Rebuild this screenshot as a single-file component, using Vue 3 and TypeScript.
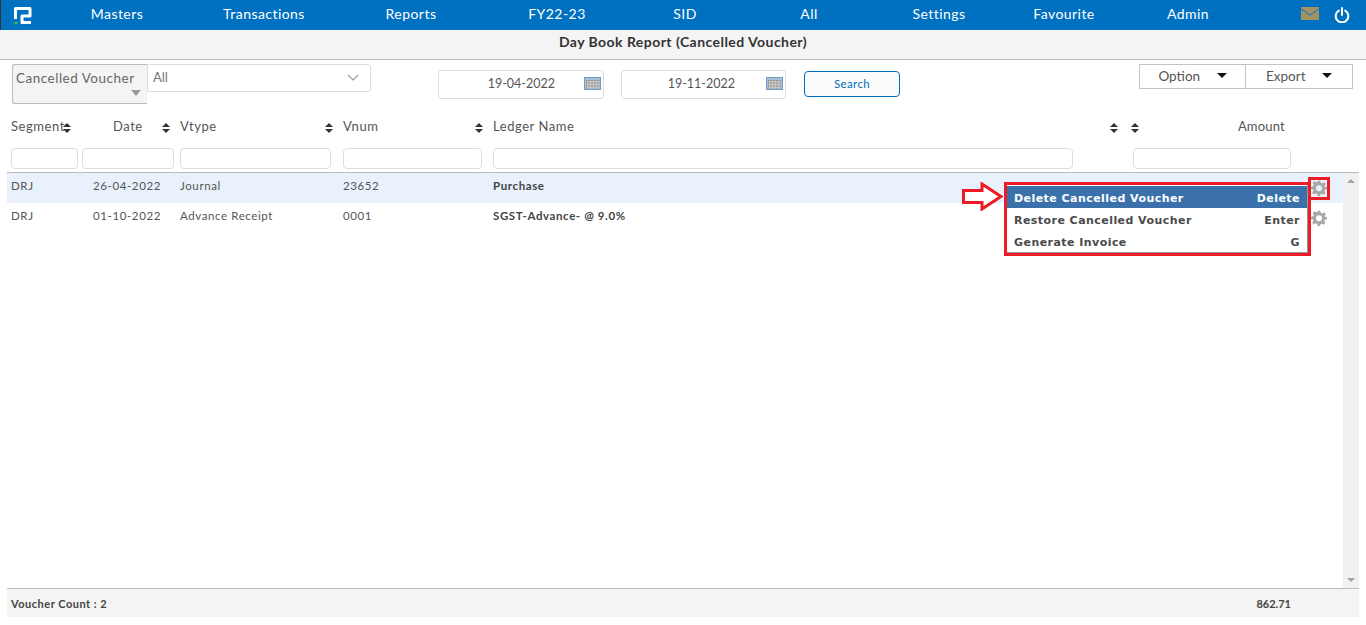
<template>
  <div class="page">
    <!-- Barra superior -->
    <header class="topbar">
      <svg class="logo" viewBox="0 0 18 18" fill="none">
        <path d="M1.500 12 V1.500 H16 V9 H8 V15.500 H17" stroke="#fff" stroke-width="3" stroke-linejoin="round" />
        <circle cx="2" cy="16" r="1.600" fill="#35c14a" />
      </svg>
      <nav class="menu">
        <a v-for="item in navItems" :key="item" class="menu-item">{{ item }}</a>
      </nav>
      <div class="top-icons">
        <svg class="mail" viewBox="0 0 18 13">
          <rect width="18" height="13" fill="#a3935f" />
          <path d="M0 2 L9 8 L18 2" fill="none" stroke="#2a7cc0" stroke-width="1.2" />
        </svg>
        <svg class="power" viewBox="0 0 16 16" fill="none" stroke="#fff" stroke-width="2" stroke-linecap="round">
          <path d="M4.800 3.600 A6.300 6.300 0 1 0 11.200 3.600" />
          <path d="M8 1 V8" />
        </svg>
      </div>
    </header>

    <div class="title-bar">Day Book Report (Cancelled Voucher)</div>

    <!-- Filtros -->
    <section class="filters">
      <div class="type-select">
        <span>Cancelled Voucher</span>
        <i class="type-caret"></i>
      </div>
      <div class="all-select">
        <span>All</span>
        <svg class="chevron" viewBox="0 0 12 7" fill="none" stroke="#999" stroke-width="1.1">
          <path d="M1 1 L6 6 L11 1" />
        </svg>
      </div>
      <div v-for="d in dates" :key="d" class="date-box">
        <span>{{ d }}</span>
        <svg class="calendar" viewBox="0 0 17 13">
          <rect x="0.5" y="0.5" width="16" height="12" fill="#a9bfd8" stroke="#6f9bc8" />
          <rect x="2" y="3" width="13" height="8.5" fill="#777" />
          <path d="M2 4.500 H15 M2 6 H15 M2 7.500 H15 M2 9 H15 M2 10.500 H15 M3.500 3 V12 M5 3 V12 M6.500 3 V12 M8 3 V12 M9.500 3 V12 M11 3 V12 M12.500 3 V12 M14 3 V12" stroke="#ddd" stroke-width="0.6" />
        </svg>
      </div>
      <button class="search-btn">Search</button>
      <div class="actions">
        <button class="action-btn">Option <i class="caret"></i></button>
        <button class="action-btn">Export <i class="caret"></i></button>
      </div>
    </section>

    <!-- Tabla -->
    <section class="grid-head">
      <div v-for="col in columns" :key="col.label + col.cls" class="head-cell" :class="col.cls">
        <span>{{ col.label }}</span>
        <svg v-if="col.sort" class="sort" viewBox="0 0 8 10">
          <path d="M4 0 L8 4 H0 Z M4 10 L0 6 H8 Z" fill="#2e3338" />
        </svg>
      </div>
    </section>
    <section class="grid-filter">
      <input v-for="col in inputCols" :key="col" class="col-input" :class="col" type="text" />
    </section>

    <div class="grid-body">
      <div class="rows">
        <div v-for="(row, i) in rows" :key="row.vnum" class="row" :class="{ selected: i === 0 }">
          <span class="c-seg">{{ row.segment }}</span>
          <span class="c-date">{{ row.date }}</span>
          <span class="c-type">{{ row.vtype }}</span>
          <span class="c-num">{{ row.vnum }}</span>
          <span class="c-ledger">{{ row.ledger }}</span>
          <svg class="gear" viewBox="0 0 24 24">
            <path fill="#a8a8a8" fill-rule="evenodd" d="M10 1h4l.6 3.200 2.200.9 2.700-1.800 2.800 2.800-1.800 2.700.9 2.200L24 10v4l-3.200.6-.9 2.200 1.800 2.700-2.800 2.800-2.700-1.800-2.200.9L14 24h-4l-.6-3.200-2.200-.9-2.700 1.800-2.800-2.800 1.800-2.700-.9-2.200L0 14v-4l3.200-.6.9-2.200-1.800-2.700 2.800-2.800 2.700 1.800 2.200-.9zM12 8a4.500 4.500 0 1 0 0 9 4.500 4.500 0 0 0 0-9z" />
          </svg>
        </div>
      </div>
      <div class="scrollbar">
        <i class="arrow-up"></i>
        <i class="arrow-down"></i>
      </div>

      <!-- Menú contextual -->
      <div class="context-menu">
        <div v-for="(m, i) in menuItems" :key="m.label" class="context-item" :class="{ active: i === 0 }">
          <span>{{ m.label }}</span>
          <span>{{ m.key }}</span>
        </div>
      </div>
      <div class="gear-mark"></div>
      <svg class="red-arrow" viewBox="0 0 41 29">
        <path d="M1.500 8.500 H20 V2 L39 14.500 L20 27 V20.500 H1.500 Z" fill="#fff" stroke="#ed1c24" stroke-width="3" />
      </svg>
    </div>

    <footer class="footer">
      <span class="count">Voucher Count : 2</span>
      <span class="total">862.71</span>
    </footer>
  </div>
</template>

<script setup lang="ts">
const navItems = ['Masters', 'Transactions', 'Reports', 'FY22-23', 'SID', 'All', 'Settings', 'Favourite', 'Admin']
const dates = ['19-04-2022', '19-11-2022']

const columns = [
  { label: 'Segment', cls: 'h-seg', sort: true },
  { label: 'Date', cls: 'h-date', sort: true },
  { label: 'Vtype', cls: 'h-type', sort: true },
  { label: 'Vnum', cls: 'h-num', sort: true },
  { label: 'Ledger Name', cls: 'h-ledger', sort: true },
  { label: '', cls: 'h-blank', sort: true },
  { label: 'Amount', cls: 'h-amount', sort: false },
]

const inputCols = ['i-seg', 'i-date', 'i-type', 'i-num', 'i-ledger', 'i-amount']

const rows = [
  { segment: 'DRJ', date: '26-04-2022', vtype: 'Journal', vnum: '23652', ledger: 'Purchase' },
  { segment: 'DRJ', date: '01-10-2022', vtype: 'Advance Receipt', vnum: '0001', ledger: 'SGST-Advance- @ 9.0%' },
]

const menuItems = [
  { label: 'Delete Cancelled Voucher', key: 'Delete' },
  { label: 'Restore Cancelled Voucher', key: 'Enter' },
  { label: 'Generate Invoice', key: 'G' },
]
</script>

<style>
html, body {
  margin: 0;
  background: #fff;
}
</style>

<style scoped>
.page {
  height: 625px;
  display: flex;
  flex-direction: column;
  overflow: hidden;
  font-family: Lato, "Open Sans", sans-serif;
  color: #555;
  background: #fff;
}

/* Barra superior */
.topbar {
  height: 30px;
  flex: none;
  display: flex;
  align-items: center;
  background: #0070c0;
  border-left: 1px solid #333;
  box-sizing: border-box;
}

.logo {
  width: 18px;
  height: 18px;
  margin: 1px 12px 0 13px;
  flex: none;
}

.menu {
  display: grid;
  grid-template-columns: 146px 148px 146px 146px 110px 138px 122px 128px 120px;
  width: 1204px;
  margin-top: -4px;
}

.menu-item {
  text-align: center;
  color: #fff;
  font-size: 14px;
  letter-spacing: 0.45px;
}

.top-icons {
  display: flex;
  align-items: center;
  gap: 15px;
  margin-left: 53px;
}

.mail {
  width: 18px;
  height: 13px;
  margin-top: -4px;
}

.power {
  width: 16px;
  height: 16px;
}

.title-bar {
  height: 29px;
  flex: none;
  background: #f4f4f4;
  border-bottom: 1px solid #bbb;
  text-align: center;
  font-size: 14px;
  font-weight: 700;
  line-height: 24px;
  color: #333;
  letter-spacing: 0.45px;
}

/* Filtros */
.filters {
  height: 44px;
  flex: none;
  position: relative;
  display: flex;
  align-items: flex-start;
  padding: 4px 0 0 12px;
  box-sizing: border-box;
}

.type-select {
  width: 135px;
  height: 40px;
  box-sizing: border-box;
  background: #f4f4f4;
  border: 1px solid #bbb;
  border-right: none;
  border-radius: 3px 0 0 3px;
  padding: 5px 0 0 3px;
  font-size: 13.500px;
  letter-spacing: 0.5px;
  color: #666;
  position: relative;
}

.type-caret {
  position: absolute;
  right: 6px;
  top: 25px;
  border: 5px solid transparent;
  border-top: 6px solid #999;
  border-bottom: none;
}

.all-select {
  width: 224px;
  height: 28px;
  box-sizing: border-box;
  border: 1px solid #ddd;
  border-radius: 0 3px 3px 0;
  display: flex;
  align-items: center;
  justify-content: space-between;
  padding: 0 11px 2px 5px;
  font-size: 13px;
  color: #777;
  margin-right: 67px;
}

.chevron {
  width: 12px;
  height: 7px;
}

.date-box {
  width: 166px;
  height: 29px;
  margin-top: 6px;
  margin-right: 17px;
  box-sizing: border-box;
  border: 1px solid #ddd;
  border-radius: 3px;
  display: flex;
  align-items: center;
  justify-content: flex-end;
  padding: 0 2px 2px 0;
  font-size: 12.500px;
  color: #555;
}

.date-box span {
  margin-right: 29px;
}

.date-box + .date-box {
  width: 165px;
  margin-right: 18px;
}

.date-box + .date-box span {
  margin-right: 31px;
}

.calendar {
  width: 17px;
  height: 13px;
}

.search-btn {
  width: 96px;
  height: 26px;
  margin-top: 7px;
  padding: 0 0 2px;
  background: #fbfbfb;
  border: 1px solid #0070c0;
  border-radius: 4px;
  color: #0070c0;
  font-family: inherit;
  font-size: 11.500px;
  letter-spacing: 0.4px;
}

.actions {
  display: flex;
  margin-left: 239px;
}

.action-btn {
  width: 107px;
  height: 25px;
  box-sizing: border-box;
  background: #fff;
  border: 1px solid #c4c4c4;
  font-family: inherit;
  font-size: 13.500px;
  color: #555;
  padding: 0 0 2px 0;
}

.action-btn + .action-btn {
  border-left: none;
}

.caret {
  display: inline-block;
  margin-left: 13px;
  vertical-align: 3px;
  border: 5px solid transparent;
  border-top: 5px solid #111;
  border-bottom: none;
}

/* Cabecera de la tabla */
.grid-head {
  height: 44px;
  flex: none;
  position: relative;
  font-size: 13px;
  letter-spacing: 0.55px;
  color: #555;
}

.head-cell {
  position: absolute;
  top: 14px;
  height: 16px;
  line-height: 16px;
}

.sort {
  position: absolute;
  top: 5px;
  right: 0;
  width: 8px;
  height: 10px;
}

.h-seg { left: 11px; width: 60px; white-space: nowrap; }
.h-date { left: 113px; width: 57px; }
.h-type { left: 180px; width: 153px; }
.h-num { left: 343px; width: 140px; }
.h-ledger { left: 493px; width: 625px; }
.h-blank { left: 1131px; width: 8px; }
.h-amount { left: 1133px; width: 152px; text-align: right; letter-spacing: 0.2px; }

.grid-filter {
  height: 24px;
  flex: none;
  display: flex;
  align-items: flex-start;
  padding-left: 11px;
  box-sizing: border-box;
}

.col-input {
  height: 21px;
  box-sizing: border-box;
  border: 1px solid #ddd;
  border-radius: 4px;
  padding: 0;
  background: #fff;
  flex: none;
}

.i-seg { width: 67px; }
.i-date { width: 92px; margin-left: 4px; }
.i-type { width: 151px; margin-left: 6px; }
.i-num { width: 139px; margin-left: 12px; }
.i-ledger { width: 580px; margin-left: 11px; }
.i-amount { width: 158px; margin-left: 60px; }

/* Cuerpo */
.grid-body {
  flex: 1;
  position: relative;
  display: flex;
  margin: 0 7px;
  border-top: 1px solid #bbb;
  border-bottom: 1px solid #bbb;
}

.rows {
  flex: 1;
}

.row {
  height: 30px;
  position: relative;
  font-size: 11.500px;
  letter-spacing: 0.6px;
  line-height: 25px;
  color: #555;
}

.row.selected {
  background: #e9f1fc;
}

.row span {
  position: absolute;
  top: 0;
}

.c-seg { left: 4px; }
.c-date { left: 76px; width: 88px; text-align: center; }
.c-type { left: 173px; }
.c-num { left: 336px; }
.c-ledger { left: 486px; font-weight: 700; color: #444; }

.gear {
  position: absolute;
  right: 16px;
  top: 7px;
  width: 16px;
  height: 16px;
}

.scrollbar {
  width: 16px;
  flex: none;
  position: relative;
  background: #f1f1f1;
}

.arrow-up, .arrow-down {
  position: absolute;
  left: 4px;
  border: 4px solid transparent;
}

.arrow-up {
  top: 6px;
  border-bottom: 4px solid #a3a3a3;
  border-top: none;
}

.arrow-down {
  bottom: 6px;
  border-top: 4px solid #a3a3a3;
  border-bottom: none;
}

/* Menú contextual y marcas rojas */
.context-menu {
  position: absolute;
  left: 997px;
  top: 9px;
  width: 307px;
  height: 74px;
  box-sizing: border-box;
  border: 3px solid #ed1c24;
  background: #fff;
  font-family: "DejaVu Sans", Verdana, sans-serif;
  font-size: 11px;
  font-weight: 700;
  color: #4a4a4a;
  padding-top: 1px;
  box-shadow: inset -1px -1px 0 #999;
}

.context-item {
  height: 22px;
  box-sizing: border-box;
  display: flex;
  align-items: center;
  justify-content: space-between;
  padding: 2px 7px 0 7px;
  margin-right: 1px;
  letter-spacing: 0.45px;
}

.context-item.active {
  background: #3a71ab;
  color: #fff;
}

.gear-mark {
  position: absolute;
  left: 1301px;
  top: 4px;
  width: 22px;
  height: 23px;
  box-sizing: border-box;
  border: 3px solid #ed1c24;
}

.red-arrow {
  position: absolute;
  left: 955px;
  top: 9px;
  width: 41px;
  height: 29px;
}

.footer {
  height: 28px;
  flex: none;
  margin: 0 7px 8px;
  background: #f4f4f4;
  display: flex;
  align-items: center;
  font-size: 11px;
  font-weight: 700;
  color: #444;
  padding: 1px 0 0 4px;
  box-sizing: border-box;
}

.count {
  letter-spacing: 0.5px;
}

.total {
  margin-left: auto;
  margin-right: 68px;
}
</style>
